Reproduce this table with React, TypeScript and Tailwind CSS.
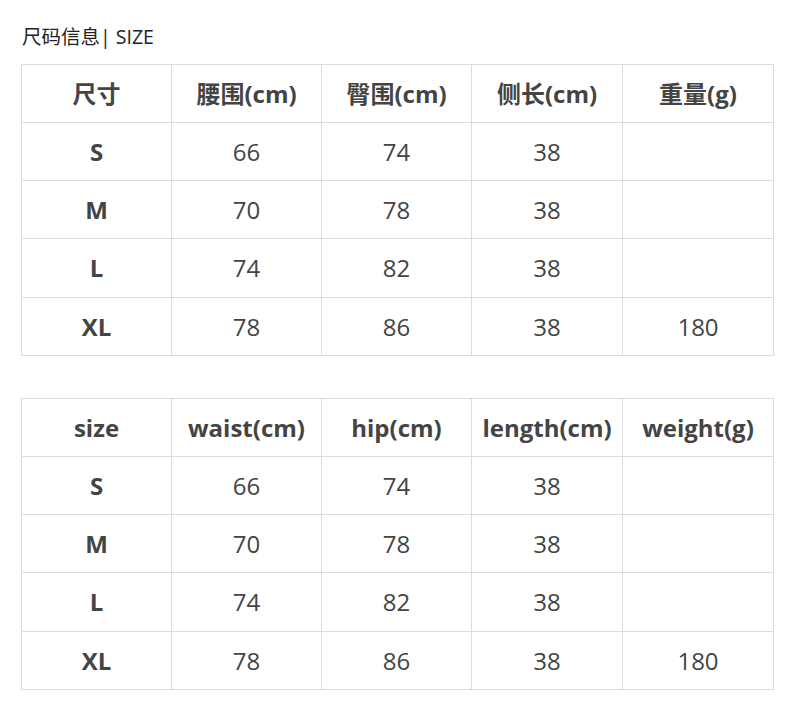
const font = {
  fontFamily: '"Open Sans", "Noto Sans CJK SC", sans-serif',
};

type Table = { head: string[]; rows: string[][] };

const rows = [
  ["S", "66", "74", "38", ""],
  ["M", "70", "78", "38", ""],
  ["L", "74", "82", "38", ""],
  ["XL", "78", "86", "38", "180"],
];

const tables: Table[] = [
  { head: ["尺寸", "腰围(cm)", "臀围(cm)", "侧长(cm)", "重量(g)"], rows },
  { head: ["size", "waist(cm)", "hip(cm)", "length(cm)", "weight(g)"], rows },
];

function SizeTable({ head, rows }: Table) {
  return (
    <div className="grid grid-cols-[150px_150px_150px_151px_151px] w-[753px] border-l border-t border-[#dcdcdc] text-[#444]">
      {head.map((h, i) => (
        <div
          key={"h" + i}
          className="h-[58px] flex items-center justify-center border-r border-b border-[#dcdcdc] text-[24px] font-bold"
        >
          {h}
        </div>
      ))}
      {rows.map((r, ri) =>
        r.map((c, ci) => (
          <div
            key={ri + "-" + ci}
            className={
              "flex items-center justify-center border-r border-b border-[#dcdcdc] text-[24px] " +
              (ri === 2 ? "h-[59px] " : "h-[58px] ") +
              (ci === 0 ? "font-bold" : "font-normal")
            }
          >
            {c}
          </div>
        ))
      )}
    </div>
  );
}

export default function App() {
  return (
    <div className="min-h-screen bg-white pl-[21px] pt-[24px]" style={font}>
      <div className="text-[19.5px] leading-[26px] text-[#222] pl-px">尺码信息| SIZE</div>
      <div className="mt-[14px]">
        <SizeTable {...tables[0]} />
      </div>
      <div className="mt-[42px]">
        <SizeTable {...tables[1]} />
      </div>
    </div>
  );
}
